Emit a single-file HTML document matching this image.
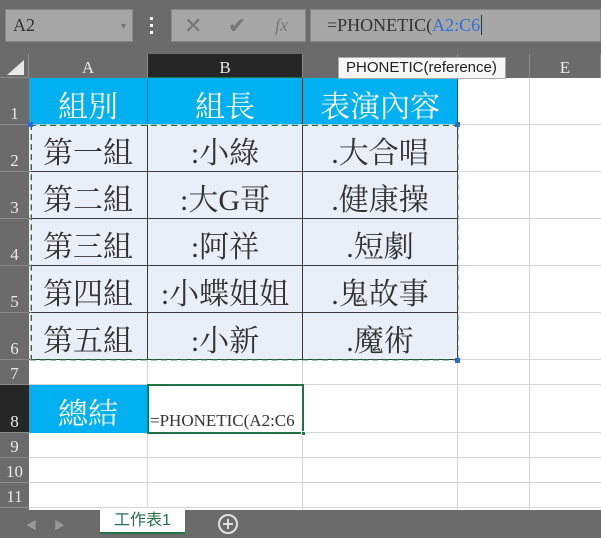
<!DOCTYPE html>
<html><head><meta charset="utf-8"><style>
*{margin:0;padding:0;box-sizing:border-box}
body{width:601px;height:538px;background:#6b6b6b;position:relative;overflow:hidden;font-family:"Liberation Serif","Noto Serif CJK SC",serif}
.a{position:absolute}
.ch{position:absolute;top:54px;height:24px;color:#e8e8e8;font-size:17px;text-align:center;line-height:27px;border-right:1px solid #8a8a8a}
.rh{position:absolute;left:0;width:29px;color:#e8e8e8;font-size:17px;text-align:center;border-bottom:1px solid #8a8a8a;display:flex;align-items:flex-end;justify-content:center;padding-bottom:0}
.c{position:absolute;display:flex;align-items:center;justify-content:center;font-size:30px;color:#333;font-family:"Liberation Serif","Noto Serif CJK SC","Noto Serif CJK TC",serif;padding-top:4px}
.d{background:#e9eff9;border-right:1px solid #3a3a3a;border-bottom:1px solid #3a3a3a}
.h{background:#00b0f0;color:#fff;border-right:1px solid #3a3a3a}
</style></head><body>
<div class="a" style="left:5px;top:9px;width:128px;height:33px;background:#a6a6a6;border:1px solid #888;font-size:18px;color:#333;line-height:31px;padding-left:7px">A2<span class="a" style="left:113px;top:1px;font-size:9px;color:#777">▼</span></div>
<div class="a" style="left:150px;top:17px;width:3px;height:3px;background:#fff"></div>
<div class="a" style="left:150px;top:24px;width:3px;height:3px;background:#fff"></div>
<div class="a" style="left:150px;top:31px;width:3px;height:3px;background:#fff"></div>
<div class="a" style="left:171px;top:9px;width:135px;height:33px;background:#a6a6a6;border:1px solid #888;color:#777;font-size:22px;line-height:31px"><span class="a" style="left:12px">✕</span><span class="a" style="left:56px">✔</span><span class="a" style="left:103px;font-style:italic;font-size:18px">fx</span></div>
<div class="a" style="left:310px;top:9px;width:291px;height:33px;background:#a6a6a6;border:1px solid #888;font-size:18px;color:#333;line-height:31px;padding-left:16px">=PHONETIC(<span style="color:#2f6fd6">A2:C6</span><span style="border-left:1px solid #333;margin-left:1px"></span></div>
<div class="a" style="left:0;top:54px;width:29px;height:24px;border-right:1px solid #8a8a8a;border-bottom:1px solid #8a8a8a"></div>
<div class="a" style="left:7px;top:60px;width:0;height:0;border-left:17px solid transparent;border-bottom:15px solid #e8e8e8"></div>
<div class="ch" style="left:29px;width:119px">A</div>
<div class="ch" style="left:148px;width:155px;background:#262626;border-bottom:1px solid #217346">B</div>
<div class="ch" style="left:303px;width:155px">C</div>
<div class="ch" style="left:458px;width:72px">D</div>
<div class="ch" style="left:530px;width:71px">E</div>
<div class="a" style="left:29px;top:78px;width:572px;height:432px;background:#fff"></div>
<div class="a" style="left:147px;top:78px;width:1px;height:432px;background:#d4d4d4"></div>
<div class="a" style="left:302px;top:78px;width:1px;height:432px;background:#d4d4d4"></div>
<div class="a" style="left:457px;top:78px;width:1px;height:432px;background:#d4d4d4"></div>
<div class="a" style="left:529px;top:78px;width:1px;height:432px;background:#d4d4d4"></div>
<div class="a" style="left:29px;top:124px;width:572px;height:1px;background:#d4d4d4"></div>
<div class="a" style="left:29px;top:171px;width:572px;height:1px;background:#d4d4d4"></div>
<div class="a" style="left:29px;top:218px;width:572px;height:1px;background:#d4d4d4"></div>
<div class="a" style="left:29px;top:265px;width:572px;height:1px;background:#d4d4d4"></div>
<div class="a" style="left:29px;top:312px;width:572px;height:1px;background:#d4d4d4"></div>
<div class="a" style="left:29px;top:359px;width:572px;height:1px;background:#d4d4d4"></div>
<div class="a" style="left:29px;top:384px;width:572px;height:1px;background:#d4d4d4"></div>
<div class="a" style="left:29px;top:432px;width:572px;height:1px;background:#d4d4d4"></div>
<div class="a" style="left:29px;top:457px;width:572px;height:1px;background:#d4d4d4"></div>
<div class="a" style="left:29px;top:482px;width:572px;height:1px;background:#d4d4d4"></div>
<div class="a" style="left:29px;top:507px;width:572px;height:1px;background:#d4d4d4"></div>
<div class="rh" style="top:78px;height:47px">1</div>
<div class="rh" style="top:125px;height:47px">2</div>
<div class="rh" style="top:172px;height:47px">3</div>
<div class="rh" style="top:219px;height:47px">4</div>
<div class="rh" style="top:266px;height:47px">5</div>
<div class="rh" style="top:313px;height:47px">6</div>
<div class="rh" style="top:360px;height:25px">7</div>
<div class="rh" style="top:385px;height:48px;background:#262626">8</div>
<div class="rh" style="top:433px;height:25px">9</div>
<div class="rh" style="top:458px;height:25px">10</div>
<div class="rh" style="top:483px;height:25px">11</div>
<div class="c h" style="left:29px;top:78px;width:119px;height:47px">組別</div>
<div class="c h" style="left:148px;top:78px;width:155px;height:47px">組長</div>
<div class="c h" style="left:303px;top:78px;width:155px;height:47px">表演內容</div>
<div class="c d" style="left:29px;top:125px;width:119px;height:47px">第一組</div>
<div class="c d" style="left:148px;top:125px;width:155px;height:47px">:小綠</div>
<div class="c d" style="left:303px;top:125px;width:155px;height:47px">.大合唱</div>
<div class="c d" style="left:29px;top:172px;width:119px;height:47px">第二組</div>
<div class="c d" style="left:148px;top:172px;width:155px;height:47px">:大G哥</div>
<div class="c d" style="left:303px;top:172px;width:155px;height:47px">.健康操</div>
<div class="c d" style="left:29px;top:219px;width:119px;height:47px">第三組</div>
<div class="c d" style="left:148px;top:219px;width:155px;height:47px">:阿祥</div>
<div class="c d" style="left:303px;top:219px;width:155px;height:47px">.短劇</div>
<div class="c d" style="left:29px;top:266px;width:119px;height:47px">第四組</div>
<div class="c d" style="left:148px;top:266px;width:155px;height:47px">:小蝶姐姐</div>
<div class="c d" style="left:303px;top:266px;width:155px;height:47px">.鬼故事</div>
<div class="c d" style="left:29px;top:313px;width:119px;height:47px">第五組</div>
<div class="c d" style="left:148px;top:313px;width:155px;height:47px">:小新</div>
<div class="c d" style="left:303px;top:313px;width:155px;height:47px">.魔術</div>
<div class="a" style="left:30px;top:124px;width:429px;height:237px;border:2px dashed #1e6e40;outline:1px solid rgba(255,255,255,.6);outline-offset:-1px"></div>
<div class="a" style="left:28px;top:122px;width:5px;height:5px;background:#2b6ad0"></div>
<div class="a" style="left:455px;top:122px;width:5px;height:5px;background:#2b6ad0"></div>
<div class="a" style="left:455px;top:358px;width:5px;height:5px;background:#2b6ad0"></div>
<div class="c h" style="left:29px;top:385px;width:118px;height:48px;border:none">總結</div>
<div class="a" style="left:147px;top:384px;width:157px;height:50px;border:2px solid #217346;font-size:17px;color:#333;padding:25px 0 0 1px;white-space:nowrap;overflow:hidden">=PHONETIC(A2:C6</div>
<div class="a" style="left:301px;top:431px;width:5px;height:5px;background:#217346;border:1px solid #fff"></div>
<div class="a" style="left:338px;top:57px;width:168px;height:22px;background:#f7f7f7;border:1px solid #aaa;font-family:'Liberation Sans',sans-serif;font-size:15px;color:#222;line-height:20px;padding-left:7px">PHONETIC(reference)</div>
<div class="a" style="left:0;top:510px;width:601px;height:28px;background:#6b6b6b"></div>
<div class="a" style="left:26px;top:517px;color:#999;font-size:11px">◀</div>
<div class="a" style="left:54px;top:517px;color:#999;font-size:11px">▶</div>
<div class="a" style="left:100px;top:508px;width:85px;height:26px;background:#fff;border-bottom:2px solid #217346;color:#217346;font-size:16px;text-align:center;line-height:25px;font-family:'Liberation Sans','Noto Sans CJK TC',sans-serif">工作表1</div>
<div class="a" style="left:218px;top:514px;width:20px;height:20px;border:2px solid #e0e0e0;border-radius:50%"></div>
<div class="a" style="left:223px;top:523px;width:10px;height:2px;background:#e0e0e0"></div>
<div class="a" style="left:227px;top:519px;width:2px;height:10px;background:#e0e0e0"></div>
</body></html>
